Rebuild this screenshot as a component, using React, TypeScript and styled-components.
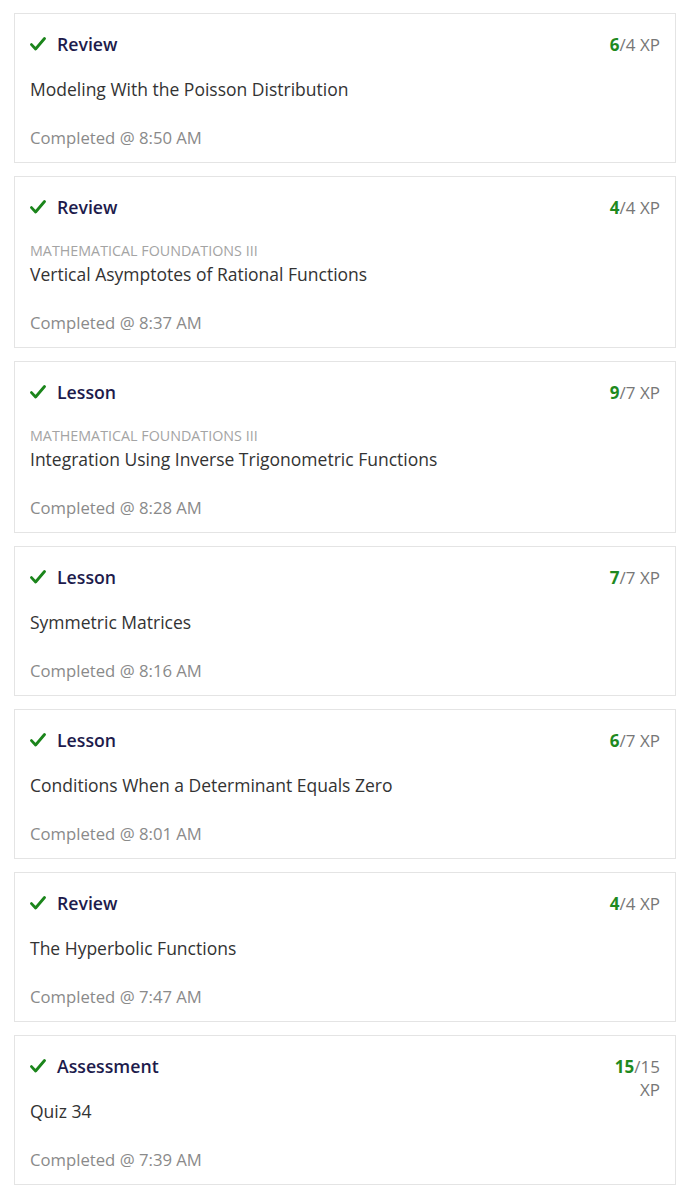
import React from "react";
import styled, { createGlobalStyle } from "styled-components";

const GlobalStyle = createGlobalStyle`
  html, body {
    margin: 0;
    padding: 0;
    background: #ffffff;
  }
  body {
    font-family: "Open Sans", Lato, "Liberation Sans", sans-serif;
    -webkit-font-smoothing: antialiased;
  }
`;

const Page = styled.div`
  display: flex;
  flex-direction: column;
  gap: 13px;
  padding: 13px 10px 13px 14px;
  width: 686px;
  box-sizing: border-box;
`;

const Card = styled.div`
  border: 1px solid #e4e4e4;
  background: #fff;
  padding: 19px 15px 12px 15px;
  display: flex;
  flex-direction: column;
`;

const Header = styled.div`
  display: flex;
  justify-content: space-between;
  align-items: flex-start;
  height: 22px;
`;

const TitleWrap = styled.div`
  display: flex;
  align-items: center;
  gap: 11px;
  height: 22px;
`;

const Title = styled.span`
  font-size: 17.7px;
  font-weight: 600;
  color: #1d1b4c;
  line-height: 22px;
`;

const Xp = styled.div`
  font-size: 17px;
  line-height: 23px;
  color: #777;
  text-align: right;
  max-width: 56px;
`;

const XpEarned = styled.b`
  color: #1f8a1f;
  font-weight: 700;
`;

const Subtitle = styled.div`
  margin-top: 22px;
  font-size: 14.3px;
  line-height: 22px;
  color: #a4a4a4;
  text-transform: uppercase;
`;

const Name = styled.div<{ $tight: boolean }>`
  margin-top: ${(p) => (p.$tight ? "0" : "22px")};
  font-size: 17.5px;
  line-height: 24px;
  color: #333;
`;

const Completed = styled.div`
  margin-top: 25px;
  font-size: 16.7px;
  line-height: 24px;
  color: #8a8a8a;
`;

const Check = () => (
  <svg width="16" height="16" viewBox="0 0 16 16" aria-hidden="true">
    <path
      d="M1.5 8.6 L5.6 13 L14.5 2.5"
      fill="none"
      stroke="#1b851b"
      strokeWidth="2.8"
      strokeLinecap="round"
      strokeLinejoin="round"
    />
  </svg>
);

type Item = {
  kind: string;
  earned: number;
  total: number;
  course?: string;
  name: string;
  time: string;
};

const items: Item[] = [
  { kind: "Review", earned: 6, total: 4, name: "Modeling With the Poisson Distribution", time: "8:50 AM" },
  { kind: "Review", earned: 4, total: 4, course: "Mathematical Foundations III", name: "Vertical Asymptotes of Rational Functions", time: "8:37 AM" },
  { kind: "Lesson", earned: 9, total: 7, course: "Mathematical Foundations III", name: "Integration Using Inverse Trigonometric Functions", time: "8:28 AM" },
  { kind: "Lesson", earned: 7, total: 7, name: "Symmetric Matrices", time: "8:16 AM" },
  { kind: "Lesson", earned: 6, total: 7, name: "Conditions When a Determinant Equals Zero", time: "8:01 AM" },
  { kind: "Review", earned: 4, total: 4, name: "The Hyperbolic Functions", time: "7:47 AM" },
  { kind: "Assessment", earned: 15, total: 15, name: "Quiz 34", time: "7:39 AM" },
];

export default function App() {
  return (
    <>
      <GlobalStyle />
      <Page>
        {items.map((it, i) => (
          <Card key={i}>
            <Header>
              <TitleWrap>
                <Check />
                <Title>{it.kind}</Title>
              </TitleWrap>
              <Xp>
                <XpEarned>{it.earned}</XpEarned>/{it.total} XP
              </Xp>
            </Header>
            {it.course && <Subtitle>{it.course}</Subtitle>}
            <Name $tight={!!it.course}>{it.name}</Name>
            <Completed>Completed @ {it.time}</Completed>
          </Card>
        ))}
      </Page>
    </>
  );
}
